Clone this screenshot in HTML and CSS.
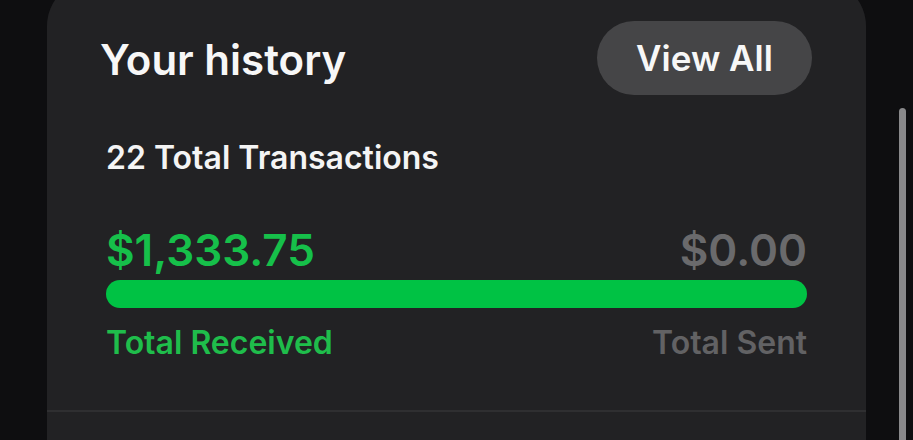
FILE: index.html
```html
<!DOCTYPE html>
<html lang="en">

<head>
    <title>Your history</title>
    <meta charset="UTF-8">
    <meta name="viewport" content="width=device-width, initial-scale=1">
    <link rel="stylesheet" href="styles.css">
</head>

<body>
    <div class="screen">
        <div class="card">
            <div class="header">
                <h1 class="title">Your history</h1>
                <button class="view-all">View All</button>
            </div>

            <p class="count">22 Total Transactions</p>

            <div class="row amounts">
                <span class="received">$1,333.75</span>
                <span class="sent">$0.00</span>
            </div>

            <div class="bar"></div>

            <div class="row labels">
                <span class="received">Total Received</span>
                <span class="sent">Total Sent</span>
            </div>

            <div class="divider"></div>
        </div>

        <!-- scroll indicator -->
        <div class="scrollbar"></div>
    </div>
</body>

</html>
```

FILE: styles.css
```css
* {
    margin: 0px;
    padding: 0px;
    box-sizing: border-box;
}

body {
    background: #0e0e10;
    font-family: Inter, "Noto Sans", sans-serif;
    width: 913px;
    height: 440px;
    overflow: hidden;
}

.screen {
    display: flex;
    height: 440px;
}

.card {
    background: #222224;
    width: 819px;
    height: 480px;
    margin-left: 47px;
    margin-top: -20px;
    border-radius: 46px 46px 0 0;
    padding: 41px 59px 0 59px;
}

.header {
    display: flex;
    justify-content: space-between;
    align-items: center;
    height: 74px;
    margin-right: -5px;
    margin-left: -6px;
}

.title {
    color: #f7f7f7;
    font-size: 42px;
    line-height: 42px;
    font-weight: 600;
    margin-top: 3px;
}

.view-all {
    background: #454547;
    color: #f7f7f7;
    border: none;
    width: 215px;
    height: 74px;
    border-radius: 37px;
    font-family: inherit;
    font-size: 35px;
    font-weight: 600;
}

.count {
    color: #f4f4f4;
    font-size: 32px;
    line-height: 32px;
    font-weight: 600;
    margin-top: 47px;
}

.row {
    display: flex;
    justify-content: space-between;
}

.amounts {
    font-size: 44px;
    line-height: 44px;
    font-weight: 600;
    margin-top: 54px;
}

.amounts .received {
    color: #16c04a;
}

.amounts .sent {
    color: #6a6a6c;
}

.bar {
    background: #00c244;
    height: 28px;
    border-radius: 14px;
    margin-top: 8px;
}

.labels {
    font-size: 32px;
    line-height: 32px;
    font-weight: 600;
    margin-top: 19px;
}

.labels .received {
    color: #1fbd4b;
}

.labels .sent {
    color: #626264;
}

.divider {
    height: 2px;
    background: #2f2f31;
    margin: 51px -59px 0 -59px;
}

.scrollbar {
    width: 7px;
    margin-left: 33px;
    margin-top: 108px;
    background: #89898b;
    border-radius: 4px 4px 0 0;
}
```
